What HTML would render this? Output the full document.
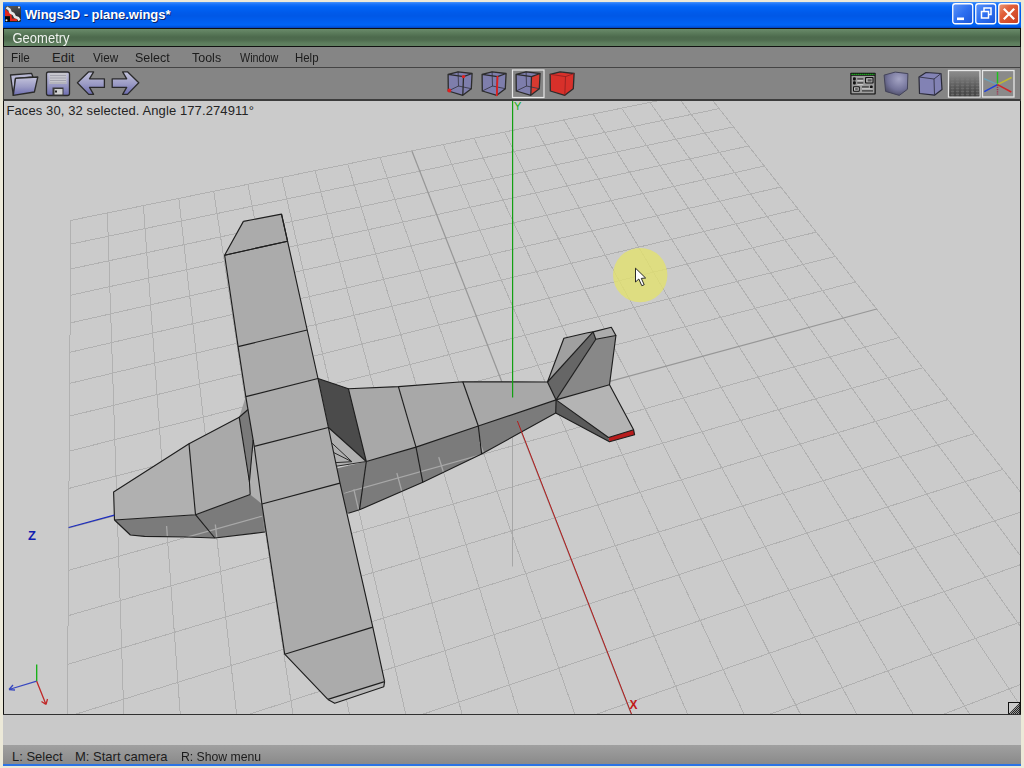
<!DOCTYPE html>
<html><head><meta charset="utf-8">
<style>
*{margin:0;padding:0;box-sizing:border-box}
html,body{width:1024px;height:768px;overflow:hidden;background:#ece9d8;font-family:"Liberation Sans",sans-serif}
.abs{position:absolute}
#title{left:3px;top:2px;width:1018px;height:26px;background:linear-gradient(#4a96fa 0px,#1a74fa 2px,#0064f6 5px,#005aea 11px,#0058e6 14px,#005ef0 19px,#0064f6 23px,#0052dc 25px,#0040b8 26px)}
#title .t{left:22px;top:5px;color:#fff;font-weight:bold;font-size:13px;letter-spacing:-0.05px;text-shadow:1px 1px 0 #0a246a;white-space:pre}
#green{left:3px;top:28px;width:1018px;height:19px;background:#111;}
#green .in{left:1px;top:1px;width:1016px;height:17px;background:linear-gradient(#6a8a6a 0px,#5b7b5b 4px,#4d6a4d 8px,#4f6c4f 11px,#5d7d5d 14px,#628262 17px)}
#green .t{left:9.5px;top:1.8px;color:#eef2ee;font-size:13px;white-space:pre;transform:scaleY(1.06);transform-origin:0 0}
#menu{left:3px;top:47px;width:1018px;height:21px;background:#444;}
#menu .in{left:1px;top:0px;width:1016px;height:20px;background:#858585}
.mi{top:3px;color:#1c1c1c;font-size:13px;white-space:pre}
#tool{left:3px;top:68px;width:1018px;height:33px;background:#444}
#tool .in{left:1px;top:0px;width:1016px;height:31px;background:#858585}
#vpframe{left:3px;top:99px;width:1018px;height:616px;background:#111;border-top:2px solid #3c3c3c;border-bottom:1px solid #303030}
#vp{left:4px;top:101px;width:1016px;height:613px;background:#cbcbcb;overflow:hidden}
#below{left:3px;top:715px;width:1018px;height:30px;background:#c9c9c9}
#status{left:3px;top:745px;width:1018px;height:19px;background:linear-gradient(#a0a0a0,#8a8a8a)}
#status .t{top:4px;color:#1c1c1c;font-size:13px;white-space:pre}
#bline{left:3px;top:764px;width:1018px;height:2px;background:#2a73e6}
svg{position:absolute;left:0;top:0}
</style></head><body>
<div id="title" class="abs">
  <svg class="abs" style="left:2px;top:4px" width="16" height="16" viewBox="0 0 16 16">
    <defs><linearGradient id="icg" x1="0" y1="0" x2="0.3" y2="1"><stop offset="0" stop-color="#5a5a5a"/><stop offset="1" stop-color="#262626"/></linearGradient></defs>
    <rect x="0" y="0" width="16" height="16" rx="1.5" fill="url(#icg)"/>
    <path d="M0 3 L6.5 8.5 L7 12.6 L12 12.6 L12 15 L5 15 L5 10.3 L0 10.3 Z" fill="#e0281c"/>
    <rect x="0" y="10.3" width="5" height="5.7" fill="#0a0a0a"/>
    <path d="M1.5 1.5 L4.5 3.5 L5.5 6.5 L8.5 8 L10 11 L13 12 L14.5 14.5" fill="none" stroke="#e8e8e8" stroke-width="2.6" stroke-linejoin="bevel"/>
    <circle cx="14" cy="1.5" r="1" fill="#eee"/><circle cx="1.5" cy="14.2" r="1" fill="#eee"/>
  </svg>
  <div class="abs t">Wings3D - plane.wings*</div>
  <svg class="abs" style="left:949px;top:0px" width="70" height="25" viewBox="0 0 70 25">
    <defs>
      <linearGradient id="bb" x1="0" y1="0" x2="1" y2="1"><stop offset="0" stop-color="#5f95f7"/><stop offset="0.5" stop-color="#2d6ff0"/><stop offset="1" stop-color="#1b55d8"/></linearGradient>
      <linearGradient id="rb" x1="0" y1="0" x2="1" y2="1"><stop offset="0" stop-color="#e8a080"/><stop offset="0.35" stop-color="#e2603a"/><stop offset="1" stop-color="#c83c20"/></linearGradient>
    </defs>
    <rect x="0.75" y="1.75" width="20" height="20" rx="2.5" fill="url(#bb)" stroke="#fff" stroke-width="1.3"/>
    <rect x="5" y="15.5" width="7" height="2.6" fill="#fff"/>
    <rect x="23.75" y="1.75" width="20" height="20" rx="2.5" fill="url(#bb)" stroke="#fff" stroke-width="1.3"/>
    <rect x="29.5" y="9.5" width="7" height="6.5" fill="none" stroke="#fff" stroke-width="1.5"/>
    <path d="M32 9 V6 H39 V12.5 H37" fill="none" stroke="#fff" stroke-width="1.5"/>
    <rect x="46.75" y="1.75" width="20" height="20" rx="2.5" fill="url(#rb)" stroke="#fff" stroke-width="1.3"/>
    <path d="M51.8 6.8 L62.2 17.2 M62.2 6.8 L51.8 17.2" stroke="#fff" stroke-width="2.2"/>
  </svg>
</div>
<div id="green" class="abs"><div class="abs in"></div><div class="abs t">Geometry</div></div>
<div id="menu" class="abs"><div class="abs in"></div>
  <div class="abs mi" style="left:8px;transform:scaleX(0.9);transform-origin:0 0">File</div>
  <div class="abs mi" style="left:49px">Edit</div>
  <div class="abs mi" style="left:90px;transform:scaleX(0.9);transform-origin:0 0">View</div>
  <div class="abs mi" style="left:132px;transform:scaleX(0.96);transform-origin:0 0">Select</div>
  <div class="abs mi" style="left:189px;transform:scaleX(0.96);transform-origin:0 0">Tools</div>
  <div class="abs mi" style="left:237px;transform:scaleX(0.83);transform-origin:0 0">Window</div>
  <div class="abs mi" style="left:292px;transform:scaleX(0.88);transform-origin:0 0">Help</div>
</div>
<div id="tool" class="abs"><div class="abs in"></div></div>
<div id="vpframe" class="abs"></div>
<div id="vp" class="abs">
<svg width="1016" height="613" viewBox="4 101 1016 613" style="left:0;top:0">
  <defs>
    <clipPath id="underclip"><polygon points="122.0,527.5 166.6,526.0 205.0,525.5 215.5,524.5 262.0,515.5 265.0,532.0 214.8,538.0 186.7,537.0 144.5,536.4 130.4,535.0"/><polygon points="344.0,493.0 555.7,413.0 481.6,454.0 422.8,482.3 359.5,509.8 348.3,513.3"/></clipPath>
  </defs>
  <g stroke="#b1b1b1" stroke-width="1" fill="none" shape-rendering="crispEdges">
<line x1="705.4" y1="91.1" x2="70.8" y2="220.4"/>
<line x1="705.4" y1="91.1" x2="1176.3" y2="690.2"/>
<line x1="719.2" y1="108.6" x2="70.7" y2="244.1"/>
<line x1="677.9" y1="96.7" x2="1133.7" y2="707.4"/>
<line x1="733.5" y1="126.9" x2="70.5" y2="269.0"/>
<line x1="650.0" y1="102.4" x2="1090.1" y2="725.1"/>
<line x1="748.6" y1="146.0" x2="70.3" y2="295.3"/>
<line x1="621.7" y1="108.2" x2="1045.3" y2="743.2"/>
<line x1="764.3" y1="166.0" x2="70.1" y2="323.0"/>
<line x1="593.0" y1="114.0" x2="999.5" y2="761.8"/>
<line x1="780.8" y1="187.0" x2="69.9" y2="352.3"/>
<line x1="563.9" y1="119.9" x2="952.4" y2="780.9"/>
<line x1="798.1" y1="209.0" x2="69.7" y2="383.4"/>
<line x1="534.4" y1="125.9" x2="904.1" y2="800.4"/>
<line x1="816.2" y1="232.1" x2="69.5" y2="416.2"/>
<line x1="504.4" y1="132.1" x2="854.5" y2="820.5"/>
<line x1="835.3" y1="256.4" x2="69.2" y2="451.2"/>
<line x1="474.0" y1="138.2" x2="803.6" y2="841.1"/>
<line x1="855.5" y1="282.0" x2="69.0" y2="488.4"/>
<line x1="443.2" y1="144.5" x2="751.2" y2="862.3"/>
<line x1="899.1" y1="337.5" x2="68.4" y2="570.4"/>
<line x1="380.1" y1="157.4" x2="642.2" y2="906.5"/>
<line x1="922.8" y1="367.7" x2="68.1" y2="615.7"/>
<line x1="347.8" y1="164.0" x2="585.3" y2="929.5"/>
<line x1="947.9" y1="399.6" x2="67.8" y2="664.4"/>
<line x1="315.0" y1="170.6" x2="526.8" y2="953.2"/>
<line x1="974.5" y1="433.5" x2="67.4" y2="716.8"/>
<line x1="281.8" y1="177.4" x2="466.6" y2="977.6"/>
<line x1="1002.8" y1="469.5" x2="67.0" y2="773.4"/>
<line x1="248.0" y1="184.3" x2="404.6" y2="1002.7"/>
<line x1="1033.0" y1="507.9" x2="66.6" y2="834.7"/>
<line x1="213.7" y1="191.3" x2="340.7" y2="1028.6"/>
<line x1="1065.2" y1="548.9" x2="66.2" y2="901.2"/>
<line x1="178.8" y1="198.4" x2="274.8" y2="1055.3"/>
<line x1="1099.6" y1="592.7" x2="65.7" y2="973.8"/>
<line x1="143.4" y1="205.6" x2="206.9" y2="1082.8"/>
<line x1="1136.6" y1="639.7" x2="65.1" y2="1053.2"/>
<line x1="107.4" y1="212.9" x2="136.8" y2="1111.1"/>
<line x1="1176.3" y1="690.2" x2="64.5" y2="1140.4"/>
<line x1="70.8" y1="220.4" x2="64.5" y2="1140.4"/>
  </g>
  <g stroke="#979797" stroke-width="1.25" fill="none">
<line x1="512.0" y1="407.9" x2="411.9" y2="150.9"/>
<line x1="512.0" y1="407.9" x2="876.7" y2="309.0"/>
<line x1="512.0" y1="407.9" x2="697.5" y2="884.1"/>
<line x1="512.0" y1="407.9" x2="68.7" y2="528.0"/>
  </g>
  <line x1="512.5" y1="431" x2="512.5" y2="566.5" stroke="#a6a6a6" stroke-width="1"/>
<polygon fill="#7b7b7b" points="114.5,520.0 195.5,514.7 250.2,494.5 300.0,477.0 366.3,461.5 416.0,447.1 478.3,426.0 556.1,399.9 555.7,413.0 481.6,454.0 422.8,482.3 359.5,509.8 348.3,513.3 265.0,532.0 214.8,538.0 186.7,537.0 144.5,536.4 130.4,535.0"/>
<g clip-path="url(#underclip)" stroke="#a8a8a8" stroke-width="1.3"><line x1="705.4" y1="91.1" x2="70.8" y2="220.4"/>
<line x1="705.4" y1="91.1" x2="1176.3" y2="690.2"/>
<line x1="719.2" y1="108.6" x2="70.7" y2="244.1"/>
<line x1="677.9" y1="96.7" x2="1133.7" y2="707.4"/>
<line x1="733.5" y1="126.9" x2="70.5" y2="269.0"/>
<line x1="650.0" y1="102.4" x2="1090.1" y2="725.1"/>
<line x1="748.6" y1="146.0" x2="70.3" y2="295.3"/>
<line x1="621.7" y1="108.2" x2="1045.3" y2="743.2"/>
<line x1="764.3" y1="166.0" x2="70.1" y2="323.0"/>
<line x1="593.0" y1="114.0" x2="999.5" y2="761.8"/>
<line x1="780.8" y1="187.0" x2="69.9" y2="352.3"/>
<line x1="563.9" y1="119.9" x2="952.4" y2="780.9"/>
<line x1="798.1" y1="209.0" x2="69.7" y2="383.4"/>
<line x1="534.4" y1="125.9" x2="904.1" y2="800.4"/>
<line x1="816.2" y1="232.1" x2="69.5" y2="416.2"/>
<line x1="504.4" y1="132.1" x2="854.5" y2="820.5"/>
<line x1="835.3" y1="256.4" x2="69.2" y2="451.2"/>
<line x1="474.0" y1="138.2" x2="803.6" y2="841.1"/>
<line x1="855.5" y1="282.0" x2="69.0" y2="488.4"/>
<line x1="443.2" y1="144.5" x2="751.2" y2="862.3"/>
<line x1="899.1" y1="337.5" x2="68.4" y2="570.4"/>
<line x1="380.1" y1="157.4" x2="642.2" y2="906.5"/>
<line x1="922.8" y1="367.7" x2="68.1" y2="615.7"/>
<line x1="347.8" y1="164.0" x2="585.3" y2="929.5"/>
<line x1="947.9" y1="399.6" x2="67.8" y2="664.4"/>
<line x1="315.0" y1="170.6" x2="526.8" y2="953.2"/>
<line x1="974.5" y1="433.5" x2="67.4" y2="716.8"/>
<line x1="281.8" y1="177.4" x2="466.6" y2="977.6"/>
<line x1="1002.8" y1="469.5" x2="67.0" y2="773.4"/>
<line x1="248.0" y1="184.3" x2="404.6" y2="1002.7"/>
<line x1="1033.0" y1="507.9" x2="66.6" y2="834.7"/>
<line x1="213.7" y1="191.3" x2="340.7" y2="1028.6"/>
<line x1="1065.2" y1="548.9" x2="66.2" y2="901.2"/>
<line x1="178.8" y1="198.4" x2="274.8" y2="1055.3"/>
<line x1="1099.6" y1="592.7" x2="65.7" y2="973.8"/>
<line x1="143.4" y1="205.6" x2="206.9" y2="1082.8"/>
<line x1="1136.6" y1="639.7" x2="65.1" y2="1053.2"/>
<line x1="107.4" y1="212.9" x2="136.8" y2="1111.1"/>
<line x1="1176.3" y1="690.2" x2="64.5" y2="1140.4"/>
<line x1="70.8" y1="220.4" x2="64.5" y2="1140.4"/></g>
<polygon fill="#b0b0b0" points="113.6,492.0 189.0,443.7 195.5,514.7 114.5,520.0" />
<polygon fill="#a9a9a9" points="189.0,443.7 239.2,417.2 250.2,494.5 195.5,514.7" />
<polygon fill="#b0b0b0" points="254.2,446.4 249.4,481.8 250.2,494.5 261.9,504.0" />
<polygon fill="#9c9c9c" points="239.2,417.2 245.8,396.6 248.0,409.5" />
<polygon fill="#7a7a7a" points="239.2,417.2 248.0,409.5 253.2,440.0 249.4,481.8" />
<polygon fill="#a8a8a8" points="348.4,388.7 398.4,386.6 416.0,447.1 366.3,461.5" />
<polygon fill="#a8a8a8" points="398.4,386.6 462.8,381.7 478.3,426.0 416.0,447.1" />
<polygon fill="#a8a8a8" points="462.8,381.7 547.5,382.0 556.1,399.9 478.3,426.0" />
<polygon fill="#4b4b4b" points="318.0,378.5 348.4,388.7 366.3,461.5 328.4,427.5" />
<polygon fill="#b0b0b0" points="328.4,427.5 366.3,461.5 336.5,466.2" />
<polygon fill="#a0a0a0" points="547.5,382.0 563.9,338.2 587.6,332.8 593.1,331.9" />
<polygon fill="#666666" points="547.5,382.0 593.1,331.9 595.8,339.2 556.1,399.9" />
<polygon fill="#888888" points="595.8,339.2 615.9,335.5 609.5,384.7 556.1,399.9" />
<polygon fill="#acacac" points="593.1,331.9 611.3,327.3 615.9,335.5 595.8,339.2" />
<polygon fill="#b4b4b4" points="556.1,399.9 609.5,384.7 633.6,429.8 608.5,437.5" />
<polygon fill="#5a5a5a" points="556.1,399.9 608.5,437.5 609.5,441.8 555.7,413.0" />
<polygon fill="#b81c1c" points="608.5,437.5 633.6,429.8 634.6,434.8 609.5,441.8" />
<polygon fill="#ababab" points="243.4,221.4 281.5,214.1 287.6,241.3 224.6,255.2" />
<polygon fill="#ababab" points="224.6,255.2 287.6,241.3 307.2,330.0 238.1,346.6" />
<polygon fill="#ababab" points="238.1,346.6 307.2,330.0 318.0,378.5 245.8,396.6" />
<polygon fill="#ababab" points="245.8,396.6 318.0,378.5 328.4,427.5 254.2,446.4" />
<polygon fill="#ababab" points="254.2,446.4 328.4,427.5 340.0,483.1 261.9,504.0" />
<polygon fill="#ababab" points="261.9,504.0 340.0,483.1 372.8,627.1 284.7,654.2" />
<polygon fill="#ababab" points="284.7,654.2 372.8,627.1 384.6,681.6 327.9,699.4" />
<polygon fill="#b8b8b8" points="327.9,699.4 384.6,681.6 383.8,686.7 334.7,703.3" />
<g fill="none" stroke="#1e1e1e" stroke-width="1.15" stroke-linejoin="round"><polyline points="243.4,221.4 281.5,214.1 287.6,241.3 224.6,255.2 243.4,221.4"/>
<polyline points="224.6,255.2 287.6,241.3"/>
<polyline points="238.1,346.6 307.2,330.0"/>
<polyline points="245.8,396.6 318.0,378.5"/>
<polyline points="254.2,446.4 328.4,427.5"/>
<polyline points="261.9,504.0 340.0,483.1"/>
<polyline points="284.7,654.2 372.8,627.1"/>
<polyline points="281.5,214.1 287.6,241.3 307.2,330.0 318.0,378.5 328.4,427.5 340.0,483.1 372.8,627.1 384.6,681.6"/>
<polyline points="224.6,255.2 238.1,346.6 245.8,396.6 254.2,446.4 261.9,504.0 284.7,654.2 327.9,699.4"/>
<polyline points="327.9,699.4 384.6,681.6"/>
<polyline points="384.6,681.6 383.8,686.7 334.7,703.3 327.9,699.4"/>
<polyline points="114.5,520.0 113.6,492.0 189.0,443.7 239.2,417.2"/>
<polyline points="189.0,443.7 195.5,514.7"/>
<polyline points="114.5,520.0 195.5,514.7 250.2,494.5"/>
<polyline points="114.5,520.0 130.4,535.0 144.5,536.4 186.7,537.0 214.8,538.0 265.0,532.0"/>
<polyline points="195.5,514.7 214.8,538.0"/>
<polyline points="318.0,378.5 348.4,388.7 398.4,386.6 462.8,381.7 547.5,382.0"/>
<polyline points="348.4,388.7 366.3,461.5 328.4,427.5"/>
<polyline points="366.3,461.5 416.0,447.1 478.3,426.0 556.1,399.9"/>
<polyline points="398.4,386.6 416.0,447.1"/>
<polyline points="462.8,381.7 478.3,426.0"/>
<polyline points="366.3,461.5 359.5,509.8"/>
<polyline points="416.0,447.1 422.8,482.3"/>
<polyline points="478.3,426.0 481.6,454.0"/>
<polyline points="359.5,509.8 422.8,482.3 481.6,454.0 555.7,413.0 556.1,399.9"/>
<polyline points="348.3,513.3 359.5,509.8"/>
<polyline points="239.2,417.2 248.0,409.5"/>
<polyline points="239.2,417.2 249.4,481.8 250.2,494.5"/>
<polyline points="253.2,440.0 249.4,481.8"/>
<polyline points="547.5,382.0 563.9,338.2 587.6,332.8 593.1,331.9"/>
<polyline points="593.1,331.9 611.3,327.3 615.9,335.5 595.8,339.2 593.1,331.9"/>
<polyline points="593.1,331.9 547.5,382.0"/>
<polyline points="595.8,339.2 556.1,399.9"/>
<polyline points="615.9,335.5 609.5,384.7 633.6,429.8 634.6,434.8 609.5,441.8 555.7,413.0"/>
<polyline points="556.1,399.9 608.5,437.5 633.6,429.8"/>
<polyline points="556.1,399.9 609.5,384.7"/>
<polyline points="547.5,382.0 556.1,399.9"/></g>
<g fill="none" stroke="#2a2a2a" stroke-width="1"><polyline points="331.6,442.8 351.9,461.7"/><polyline points="333.6,452.5 351.9,461.7"/><polyline points="336.5,466.2 366.3,461.5"/><polyline points="335.7,462.6 351.9,461.7"/></g>
  <line x1="512.6" y1="101" x2="512.6" y2="397.5" stroke="#12a012" stroke-width="1.2"/>
  <line x1="517.4" y1="421" x2="631.5" y2="714" stroke="#b41c1c" stroke-width="1"/>
  <line x1="68.6" y1="527.5" x2="114.3" y2="515.2" stroke="#1c2cc0" stroke-width="1.2"/>
  <text x="514" y="110" font-size="11" fill="#14b014" font-family="Liberation Sans">Y</text>
  <text x="629.5" y="708.5" font-size="12" font-weight="bold" fill="#c01818" font-family="Liberation Sans">X</text>
  <text x="28" y="540" font-size="13" font-weight="bold" fill="#1020b0" font-family="Liberation Sans">Z</text>
  <text x="6.5" y="115" font-size="13" fill="#242424" font-family="Liberation Sans" letter-spacing="0.1">Faces 30, 32 selected. Angle 177.274911°</text>
  <!-- mini axes -->
  <g fill="none" stroke-width="1.3">
    <path d="M36.7 681.2 V664.5" stroke="#10b010"/>
    <path d="M36.7 681.2 L9 689.5 M9 689.5 L13 685 M9 689.5 L15 690" stroke="#3848c0"/>
    <path d="M36.7 681.2 L46 704.5 M46 704.5 L41.5 701.5 M46 704.5 L47.5 699" stroke="#c02828"/>
  </g>
  <!-- cursor halo -->
  <circle cx="640.2" cy="275.1" r="27.2" fill="#e2e070" fill-opacity="0.82"/>
  <path d="M635.5 268.2 L635.5 282 L638.8 279 L641.8 285.7 L644.2 284.7 L641.3 278.4 L645.6 278 Z" fill="#fff" stroke="#151515" stroke-width="0.9" stroke-linejoin="round"/>
  <!-- resize corner -->
  <rect x="1008.5" y="702.5" width="11" height="11" fill="#cbcbcb" stroke="#111" stroke-width="1"/>
  <defs><pattern id="dith" width="2" height="2" patternUnits="userSpaceOnUse"><rect width="2" height="2" fill="#9a9a9a"/><rect width="1" height="1" fill="#222"/><rect x="1" y="1" width="1" height="1" fill="#222"/></pattern></defs><path d="M1019.5 703 L1019.5 714 L1008.5 714 Z" fill="url(#dith)"/>
</svg>
</div>
<div id="below" class="abs"></div>
<div id="status" class="abs">
  <div class="abs t" style="left:9px">L: Select</div>
  <div class="abs t" style="left:72px">M: Start camera</div>
  <div class="abs t" style="left:178px;transform:scaleX(0.94);transform-origin:0 0">R: Show menu</div>
</div>
<div id="bline" class="abs"></div>

<svg width="1024" height="101" viewBox="0 0 1024 101" style="position:absolute;left:0;top:0">
  <defs>
    <linearGradient id="lav" x1="0" y1="0" x2="0" y2="1"><stop offset="0" stop-color="#c4c4dc"/><stop offset="0.55" stop-color="#9a9ac4"/><stop offset="1" stop-color="#6c6cb0"/></linearGradient>
    <linearGradient id="lav2" x1="0" y1="0" x2="1" y2="1"><stop offset="0" stop-color="#b0b0d0"/><stop offset="1" stop-color="#7474a8"/></linearGradient>
    <linearGradient id="floor" x1="0" y1="0" x2="0" y2="1"><stop offset="0" stop-color="#8c8c8c"/><stop offset="0.4" stop-color="#767676"/><stop offset="1" stop-color="#4a4a4a"/></linearGradient>
    <radialGradient id="sph" cx="0.62" cy="0.3" r="0.85"><stop offset="0" stop-color="#a4a4c4"/><stop offset="0.55" stop-color="#74749a"/><stop offset="1" stop-color="#3c3c50"/></radialGradient><linearGradient id="fmg" x1="0" y1="0" x2="0" y2="1"><stop offset="0.2" stop-color="#000"/><stop offset="1" stop-color="#aaa"/></linearGradient><pattern id="chk" width="5" height="3" patternUnits="userSpaceOnUse"><rect width="5" height="3" fill="#3e3e3e"/><ellipse cx="2.5" cy="1.5" rx="1.8" ry="1" fill="#7a7a7a"/></pattern>
  </defs>
  <!-- folder -->
  <path d="M10.5 75 L31.5 73.3 L33 77 L15.5 78.3 L13.3 95.3 Z" fill="#b8b8d4" stroke="#2a2a2a" stroke-width="1.3" stroke-linejoin="round"/>
  <path d="M15.5 78.3 L37.8 77 L34.4 92 L13.3 95.3 Z" fill="url(#lav)" stroke="#2a2a2a" stroke-width="1.3" stroke-linejoin="round"/>
  <!-- floppy -->
  <rect x="46.5" y="72" width="23" height="23.5" rx="2" fill="url(#lav)" stroke="#2a2a2a" stroke-width="1.3"/>
  <rect x="49.5" y="73" width="17" height="11" fill="#c6c6cc"/>
  <path d="M50 75.5 H66 M50 78 H66 M50 80.5 H66 M50 83 H66" stroke="#9a9aa6" stroke-width="0.8"/>
  <rect x="52.5" y="87.5" width="11" height="8" fill="#3a3a3a"/>
  <rect x="54.5" y="89" width="8" height="5.5" fill="#d0d0d0"/>
  <rect x="55" y="90.5" width="2" height="2" fill="#222"/>
  <!-- arrows -->
  <path d="M77.4 82.8 L88.7 71.8 L93.6 71.8 L89.5 78.8 L104.4 78.8 L104.4 87.4 L89.5 87.4 L93.6 94.4 L88.7 94.4 Z" fill="url(#lav)" stroke="#2a2a2a" stroke-width="1.3" stroke-linejoin="round"/>
  <path d="M138.8 82.8 L127.5 71.8 L122.6 71.8 L126.7 78.8 L112.2 78.8 L112.2 87.4 L126.7 87.4 L122.6 94.4 L127.5 94.4 Z" fill="url(#lav)" stroke="#2a2a2a" stroke-width="1.3" stroke-linejoin="round"/>
  <!-- select mode cubes -->
<g stroke-linejoin="round" stroke-linecap="round">
<polygon points="448.1,74.3 458.1,71.9 472.1,73.5 471.3,88.7 462.8,95.3 448.3,91.0" fill="#7e7eac"/>
<path d="M458.1,71.9 L458.5,86.0 M448.3,91.0 L458.5,86.0 L471.3,88.7" fill="none" stroke="#3a3a4a" stroke-width="0.9"/>
<path d="M448.1,74.3 L458.1,71.9 L472.1,73.5 L463.5,76.6 Z M463.5,76.6 L462.8,95.3 M472.1,73.5 L471.3,88.7 L462.8,95.3 L448.3,91.0 L448.1,74.3" fill="none" stroke="#2c2c2c" stroke-width="1.3"/>
<circle cx="463.5" cy="76.6" r="1.7" fill="#e02020"/><circle cx="449.3" cy="90.5" r="1.9" fill="#e02020"/>
<polygon points="482.1,74.3 492.1,71.9 506.1,73.5 505.3,88.7 496.8,95.3 482.3,91.0" fill="#7e7eac"/>
<path d="M492.1,71.9 L492.5,86.0 M482.3,91.0 L492.5,86.0 L505.3,88.7" fill="none" stroke="#3a3a4a" stroke-width="0.9"/>
<path d="M482.1,74.3 L492.1,71.9 L506.1,73.5 L497.5,76.6 Z M497.5,76.6 L496.8,95.3 M506.1,73.5 L505.3,88.7 L496.8,95.3 L482.3,91.0 L482.1,74.3" fill="none" stroke="#2c2c2c" stroke-width="1.3"/>
<path d="M497.5,76.6 L496.8,95.3" stroke="#e02020" stroke-width="1.8"/>
<polygon points="516.1,74.3 526.1,71.9 540.1,73.5 539.3,88.7 530.8,95.3 516.3,91.0" fill="#7e7eac"/>
<polygon points="531.5,76.6 540.1,73.5 539.3,88.7 530.8,95.3" fill="#d83a30"/>
<path d="M526.1,71.9 L526.5,86.0 M516.3,91.0 L526.5,86.0 L539.3,88.7" fill="none" stroke="#3a3a4a" stroke-width="0.9"/>
<path d="M516.1,74.3 L526.1,71.9 L540.1,73.5 L531.5,76.6 Z M531.5,76.6 L530.8,95.3 M540.1,73.5 L539.3,88.7 L530.8,95.3 L516.3,91.0 L516.1,74.3" fill="none" stroke="#2c2c2c" stroke-width="1.3"/>
<polygon points="550.1,74.3 560.1,71.9 574.1,73.5 573.3,88.7 564.8,95.3 550.3,91.0" fill="#d8302a"/>
<path d="M550.1,74.3 L560.1,71.9 L574.1,73.5 L573.3,88.7 L564.8,95.3 L550.3,91.0 Z" fill="none" stroke="#2c2c2c" stroke-width="1.3"/><path d="M550.1,74.3 L565.5,76.6 L574.1,73.5 M565.5,76.6 L564.8,95.3" fill="none" stroke="#8a2020" stroke-width="0.8"/>
</g>
  <rect x="512.5" y="70" width="31.5" height="27.5" fill="none" stroke="#e8e8e8" stroke-width="1.2"/>
  <!-- right icons -->
  <rect x="850.3" y="72.7" width="25.4" height="21.9" rx="0.8" fill="#111"/>
  <rect x="851.5" y="75.8" width="23" height="17.6" fill="#9c9c9c"/>
  <path d="M851.5 74.3 H874.5" stroke="#22c022" stroke-width="1.3" stroke-dasharray="1.3,0.7"/>
  <rect x="853" y="77.3" width="2.8" height="3.2" rx="1" fill="#111"/><rect x="853" y="81.3" width="2.8" height="3.2" rx="1" fill="#111"/>
  <rect x="857.3" y="78" width="6" height="1.7" fill="#555"/><rect x="857.3" y="80.2" width="6" height="1" fill="#d0d0d0"/>
  <rect x="857.3" y="82" width="6" height="1.7" fill="#555"/><rect x="857.3" y="84.2" width="6" height="1" fill="#d0d0d0"/>
  <rect x="865" y="77" width="8.6" height="6.6" rx="1" fill="#111"/><rect x="866.2" y="78.2" width="6.2" height="4.2" fill="#c8c8c8"/><rect x="867.5" y="79.2" width="4.2" height="2.4" fill="#555"/>
  <rect x="853" y="86.3" width="6.8" height="5.4" rx="1" fill="#111"/><rect x="854" y="87.3" width="4.8" height="3.4" fill="#c0c0c0"/><rect x="855.2" y="88" width="2.6" height="2" fill="#666"/>
  <rect x="862" y="86" width="6.8" height="1.7" fill="#555"/><rect x="870" y="85.5" width="2.6" height="3" rx="0.8" fill="#111"/>
  <rect x="862" y="88.3" width="10.5" height="1" fill="#d0d0d0"/><rect x="862" y="90" width="11" height="1.7" fill="#555"/>
  <path d="M884.1 75.1 L895.2 72.1 L907.9 73.6 L907.4 89.3 L899.3 95.4 L885.6 91.4 Z" fill="url(#sph)" stroke="#44445a" stroke-width="1" stroke-linejoin="round"/>
  <path d="M919 77 L926 72.5 L941 73.5 L942 89.5 L934.5 95.2 L919.5 93.5 Z" fill="#8282b4" stroke="#2a2a38" stroke-width="1.2" stroke-linejoin="round"/>
  <path d="M919 77 L934 79 L941 73.5 M934 79 L934.5 95.2" fill="none" stroke="#3a3a50" stroke-width="1"/>
  <rect x="948.5" y="70.5" width="31.5" height="26.5" fill="url(#floor)" stroke="#e6e6e6" stroke-width="1.3"/>
  <mask id="fm"><rect x="948" y="70" width="33" height="28" fill="url(#fmg)"/></mask><rect x="949.5" y="76" width="30" height="20.5" fill="url(#chk)" mask="url(#fm)"/>
  <rect x="982.5" y="70.5" width="31.5" height="26.5" fill="#8a8a8a" stroke="#e6e6e6" stroke-width="1.3"/>
  <g stroke-width="1.5">
    <path d="M997.5 84.6 V72" stroke="#20c020"/>
    <path d="M997.5 84.6 L1011.6 77.5" stroke="#c0b830"/>
    <path d="M997.5 84.6 L984.1 78.6" stroke="#6aa0b8"/>
    <path d="M997.5 84.6 L1011.3 92" stroke="#d02828"/>
    <path d="M997.5 84.6 L984.3 91.6" stroke="#2040d8"/>
    <path d="M997.5 84.6 V95" stroke="#a03050" stroke-dasharray="1.2,1"/>
  </g>
</svg>

</body></html>
